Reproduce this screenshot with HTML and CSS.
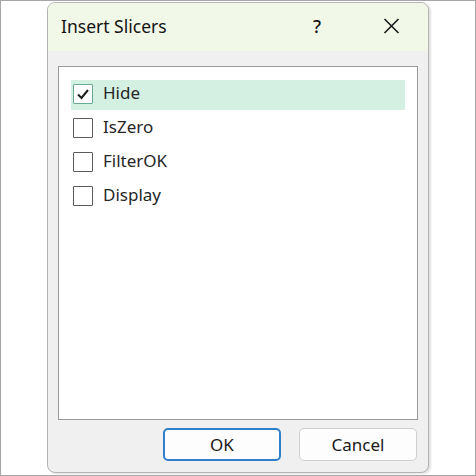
FILE: index.html
```html
<!DOCTYPE html>
<html>
<head>
<meta charset="utf-8">
<link rel="stylesheet" href="styles.css">
</head>
<body>
<div class="frame">
  <div class="dialog">
    <div class="titlebar">
      <span class="title">Insert Slicers</span>
      <span class="help">?</span>
      <span class="close">
        <svg width="17" height="16" viewBox="0 0 17 16"><path d="M1.5 1 L15.5 15 M15.5 1 L1.5 15" stroke="#1a1a1a" stroke-width="1.6" fill="none"/></svg>
      </span>
    </div>
    <div class="content">
      <div class="listbox">
        <div class="row selected">
          <span class="box checked">
            <svg width="16" height="16" viewBox="0 0 16 16"><path d="M3 8.5 L6.5 12 L13 4" stroke="#1b1b1b" stroke-width="2" fill="none"/></svg>
          </span>
          <span class="label">Hide</span>
        </div>
        <div class="row"><span class="box"></span><span class="label">IsZero</span></div>
        <div class="row"><span class="box"></span><span class="label">FilterOK</span></div>
        <div class="row"><span class="box"></span><span class="label">Display</span></div>
      </div>
      <div class="buttons">
        <button class="btn primary">OK</button>
        <button class="btn">Cancel</button>
      </div>
    </div>
  </div>
</div>
</body>
</html>
```
FILE: styles.css
```css
html, body {
  margin: 0;
  padding: 0;
  background: #ffffff;
}
.frame {
  width: 476px;
  height: 476px;
  box-sizing: border-box;
  border: 1px solid #a6a6a6;
  padding: 1px 0 0 46px;
  font-family: "Noto Sans", "Open Sans", sans-serif;
  color: #141414;
}
.dialog {
  width: 382px;
  height: 471px;
  box-sizing: border-box;
  border: 1px solid #b4b4b4;
  border-radius: 8px;
  background: #f0f0f0;
  box-shadow: 2px 1px 2px rgba(0,0,0,0.12);
  overflow: hidden;
  display: flex;
  flex-direction: column;
}
.titlebar {
  height: 48px;
  background: #f2f8e8;
  display: flex;
  align-items: center;
  padding: 0 0 0 13px;
  flex: none;
}
.title {
  font-size: 17.5px;
  flex: 1;
  padding-bottom: 2px;
}
.help {
  font-size: 18px;
  width: 14px;
  margin-right: 56px;
  font-weight: 500;
  padding-bottom: 2px;
}
.close {
  width: 17px;
  height: 16px;
  margin-right: 28px;
  display: flex;
  margin-bottom: 2px;
}
.content {
  flex: 1;
  padding: 15px 10px 11px 10px;
  display: flex;
  flex-direction: column;
}
.listbox {
  height: 354px;
  box-sizing: border-box;
  border: 1.5px solid #9a9a9a;
  background: #ffffff;
  padding: 12.5px 12px 0 12px;
  display: flex;
  flex-direction: column;
  gap: 4px;
}
.row {
  height: 30px;
  display: flex;
  align-items: center;
  padding-left: 2px;
  padding-bottom: 4px;
  box-sizing: border-box;
}
.row.selected {
  background: #d4f0e2;
}
.box {
  width: 20px;
  height: 20px;
  box-sizing: border-box;
  border: 1.5px solid #5a5a5a;
  border-radius: 1px;
  background: #ffffff;
  display: flex;
  align-items: center;
  justify-content: center;
  margin-right: 10px;
  margin-top: 3px;
}
.box.checked {
  border-color: #6aaa92;
}
.label {
  font-size: 17px;
  color: #262626;
}
.buttons {
  display: flex;
  justify-content: flex-end;
  gap: 18px;
  margin-top: 8px;
  padding-right: 1px;
}
.btn {
  width: 118px;
  height: 33px;
  box-sizing: border-box;
  border: 1.5px solid #cfcfcf;
  border-radius: 5px;
  background: #fdfdfd;
  font-family: "Noto Sans", "Open Sans", sans-serif;
  font-size: 17px;
  color: #1a1a1a;
  padding: 0 0 1px 0;
}
.btn.primary {
  border: 2px solid #2f7fca;
}
```
